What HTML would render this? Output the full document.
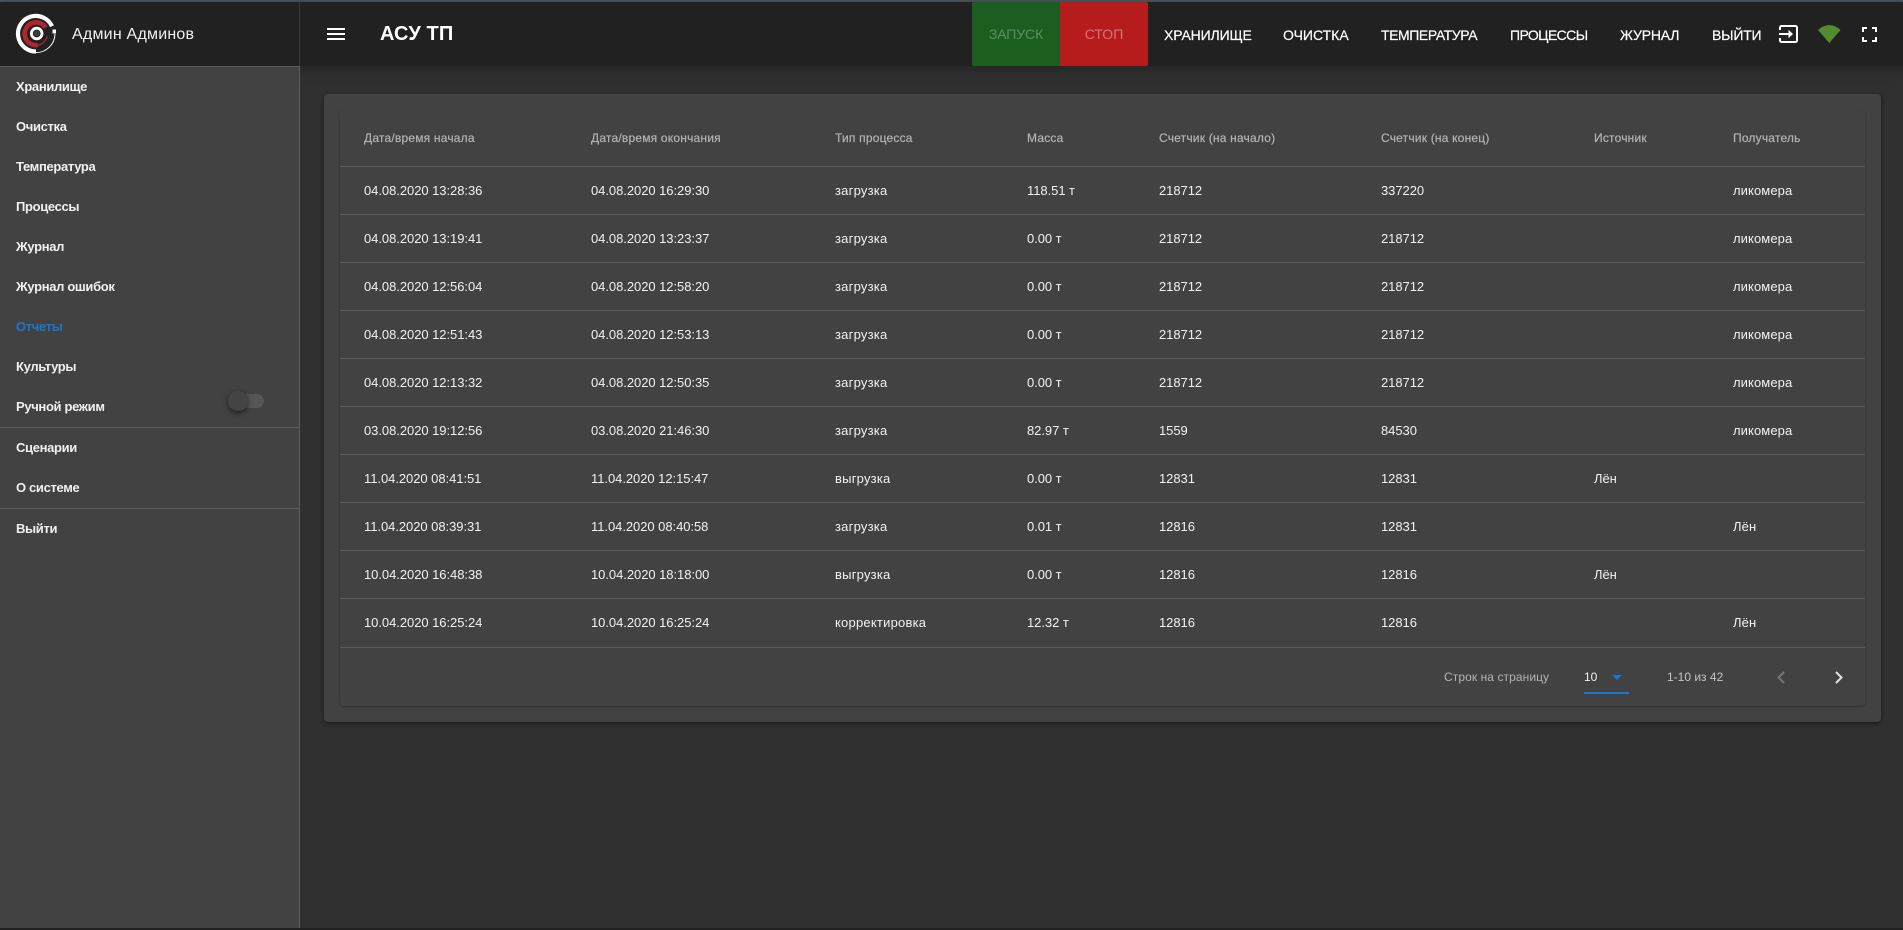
<!DOCTYPE html>
<html lang="ru">
<head>
<meta charset="utf-8">
<title>АСУ ТП</title>
<style>
*{box-sizing:border-box}
html,body{margin:0;padding:0;width:1903px;height:930px;overflow:hidden;background:#303030;font-family:"Liberation Sans",sans-serif;color:#fff}
.abs{position:absolute;white-space:nowrap}
#topline{left:0;top:0;width:1903px;height:2px;background:#4e5660}
#appbar{left:0;top:2px;width:1903px;height:64px;background:#212121;box-shadow:0 2px 6px rgba(0,0,0,.35),0 6px 16px rgba(0,0,0,.2)}
#drawer{left:0;top:2px;width:300px;height:926px;background:#424242;border-right:1px solid #5c5c5c}
#dhead{left:0;top:0;width:299px;height:65px;background:#212121;border-bottom:1px solid #585858}
#foot{left:0;top:928px;width:1903px;height:2px;background:#212121}
.mi{position:absolute;left:16px;font-size:13px;font-weight:700;line-height:16px;height:16px;color:#f0f0f0;letter-spacing:-.34px}
.hr{position:absolute;left:0;width:299px;height:1px;background:#5c5c5c}
.nav{position:absolute;top:25px;font-size:14px;line-height:16px;font-weight:400;color:#fff;-webkit-text-stroke:.2px #fff;white-space:nowrap}
#card{left:324px;top:94px;width:1557px;height:628px;background:#424242;border-radius:4px;box-shadow:0 2px 3px rgba(0,0,0,.3),0 1px 6px rgba(0,0,0,.15)}
#inner{left:340px;top:110px;width:1525px;height:596px;background:#424242;border-radius:4px;box-shadow:0 1px 2px rgba(0,0,0,.28),0 0 1px rgba(0,0,0,.06)}
table{position:absolute;left:0;top:0;border-collapse:collapse;table-layout:fixed;width:1525px}
th,td{padding:0 0 0 24px;text-align:left;font-size:13px;white-space:nowrap;border-bottom:1px solid #5a5a5a;overflow:hidden}
th{height:56px;font-weight:400;color:#b3b3b3;font-size:12px;letter-spacing:.2px;-webkit-text-stroke:.2px #b3b3b3}
td{height:48px;color:#f2f2f2;font-size:13px;letter-spacing:-.05px}
td:nth-child(3){letter-spacing:.22px}
td:nth-child(8){letter-spacing:.1px}
tbody tr:last-child td{height:49px}
.pg{position:absolute;font-size:12px;line-height:16px;white-space:nowrap}
</style>
</head>
<body>
<div id="topline" class="abs"></div>
<div id="appbar" class="abs"></div>
<div id="foot" class="abs"></div>

<div id="drawer" class="abs">
  <div id="dhead" class="abs">
    <svg class="abs" style="left:14px;top:11px" width="44" height="44" viewBox="0 0 44 44">
      <path d="M38 13.300A17.800 17.800 0 1 0 22 38.500" fill="none" stroke="#fff" stroke-width="4.200"/>
      <path d="M22 39.600A19 19 0 0 0 41 21" fill="none" stroke="#fff" stroke-width="1"/>
      <path d="M38.500 16.500h3.500v4h-3.500z" fill="#fff"/>
      <path d="M31.700 14.700A11.400 11.400 0 1 0 24 32" fill="none" stroke="#b2252f" stroke-width="4.600"/>
      <path d="M24 32A11.400 11.400 0 0 0 33.200 23" fill="none" stroke="#b2252f" stroke-width="1.200"/>
      <circle cx="22.700" cy="20.500" r="5.300" fill="none" stroke="#fff" stroke-width="2.800"/>
      <circle cx="22.700" cy="20.500" r="3" fill="#3c3c3c"/>
    </svg>
    <div class="abs" style="left:72px;top:23px;font-size:16px;line-height:20px;color:#f0f0f0;letter-spacing:.22px">Админ Админов</div>
  </div>
  <div class="mi" style="top:77px">Хранилище</div>
  <div class="mi" style="top:117px">Очистка</div>
  <div class="mi" style="top:157px">Температура</div>
  <div class="mi" style="top:197px">Процессы</div>
  <div class="mi" style="top:237px">Журнал</div>
  <div class="mi" style="top:277px">Журнал ошибок</div>
  <div class="mi" style="top:317px;color:#1976d2">Отчеты</div>
  <div class="mi" style="top:357px">Культуры</div>
  <div class="mi" style="top:397px">Ручной режим</div>
  <div class="abs" style="left:229px;top:392px;width:35px;height:14px;border-radius:7px;background:#565656"></div>
  <div class="abs" style="left:228px;top:389px;width:20px;height:20px;border-radius:50%;background:#444;box-shadow:0 2px 4px rgba(0,0,0,.4),0 1px 8px rgba(0,0,0,.2)"></div>
  <div class="hr" style="top:425px"></div>
  <div class="mi" style="top:438px">Сценарии</div>
  <div class="mi" style="top:478px">О системе</div>
  <div class="hr" style="top:506px"></div>
  <div class="mi" style="top:519px">Выйти</div>
</div>

<div class="abs" style="left:0;top:2px;width:1903px;height:64px;pointer-events:none">
  <div class="abs" style="left:299px;top:0;width:1px;height:64px;background:#3a3a3a"></div>
  <svg class="abs" style="left:327px;top:26px" width="18" height="12" viewBox="0 0 18 12"><path d="M0 0h18v2H0zM0 5h18v2H0zM0 10h18v2H0z" fill="#fff"/></svg>
  <div class="abs" style="left:380px;top:20px;font-size:20px;line-height:24px;font-weight:700;letter-spacing:.1px;color:#fff">АСУ ТП</div>

  <div class="abs" style="left:972px;top:0;width:88px;height:64px;background:#1b5e20;border-radius:2px 0 0 2px;color:#5a9060;font-size:14px;text-align:center;line-height:64px;letter-spacing:-.1px">ЗАПУСК</div>
  <div class="abs" style="left:1060px;top:0;width:88px;height:64px;background:#b71c1c;border-radius:0 2px 2px 0;color:#d67474;font-size:14px;text-align:center;line-height:64px">СТОП</div>

  <div class="nav" style="left:1164px;letter-spacing:-.14px">ХРАНИЛИЩЕ</div>
  <div class="nav" style="left:1283px">ОЧИСТКА</div>
  <div class="nav" style="left:1381px;letter-spacing:-.42px">ТЕМПЕРАТУРА</div>
  <div class="nav" style="left:1510px;letter-spacing:-.6px">ПРОЦЕССЫ</div>
  <div class="nav" style="left:1620px;letter-spacing:-.2px">ЖУРНАЛ</div>
  <div class="nav" style="left:1712px;letter-spacing:-.2px">ВЫЙТИ</div>

  <svg class="abs" style="left:1779px;top:23px" width="20" height="18" viewBox="0 0 20 18">
    <path d="M1 5V2.500A1.500 1.500 0 0 1 2.500 1h14A1.500 1.500 0 0 1 18 2.500v13a1.500 1.500 0 0 1-1.500 1.500h-14A1.500 1.500 0 0 1 1 15.500V13" fill="none" stroke="#fff" stroke-width="2"/>
    <path d="M0 8h9.500V4.800L14 9l-4.500 4.200V10H0z" fill="#fff"/>
  </svg>
  <svg class="abs" style="left:1817px;top:23px;overflow:visible" width="25" height="19" viewBox="0 0 25 19"><path d="M1 5Q12.250 -5 23.500 5L12.300 18z" fill="#558b2f"/></svg>
  <svg class="abs" style="left:1862px;top:25px" width="15" height="15" viewBox="0 0 15 15"><path d="M0 5V0h5v2H2v3zM10 0h5v5h-2V2h-3zM15 10v5h-5v-2h3v-3zM5 15H0v-5h2v3h3z" fill="#fff"/></svg>
</div>

<div class="abs" style="left:300px;top:66px;width:1603px;height:14px;background:linear-gradient(#272727,#303030)"></div>

<div id="card" class="abs"></div>
<div id="inner" class="abs">
<table>
<colgroup><col style="width:227px"><col style="width:244px"><col style="width:192px"><col style="width:132px"><col style="width:222px"><col style="width:213px"><col style="width:139px"><col style="width:156px"></colgroup>
<thead><tr><th>Дата/время начала</th><th>Дата/время окончания</th><th>Тип процесса</th><th>Масса</th><th>Счетчик (на начало)</th><th>Счетчик (на конец)</th><th>Источник</th><th>Получатель</th></tr></thead>
<tbody>
<tr><td>04.08.2020 13:28:36</td><td>04.08.2020 16:29:30</td><td>загрузка</td><td>118.51 т</td><td>218712</td><td>337220</td><td></td><td>ликомера</td></tr>
<tr><td>04.08.2020 13:19:41</td><td>04.08.2020 13:23:37</td><td>загрузка</td><td>0.00 т</td><td>218712</td><td>218712</td><td></td><td>ликомера</td></tr>
<tr><td>04.08.2020 12:56:04</td><td>04.08.2020 12:58:20</td><td>загрузка</td><td>0.00 т</td><td>218712</td><td>218712</td><td></td><td>ликомера</td></tr>
<tr><td>04.08.2020 12:51:43</td><td>04.08.2020 12:53:13</td><td>загрузка</td><td>0.00 т</td><td>218712</td><td>218712</td><td></td><td>ликомера</td></tr>
<tr><td>04.08.2020 12:13:32</td><td>04.08.2020 12:50:35</td><td>загрузка</td><td>0.00 т</td><td>218712</td><td>218712</td><td></td><td>ликомера</td></tr>
<tr><td>03.08.2020 19:12:56</td><td>03.08.2020 21:46:30</td><td>загрузка</td><td>82.97 т</td><td>1559</td><td>84530</td><td></td><td>ликомера</td></tr>
<tr><td>11.04.2020 08:41:51</td><td>11.04.2020 12:15:47</td><td>выгрузка</td><td>0.00 т</td><td>12831</td><td>12831</td><td>Лён</td><td></td></tr>
<tr><td>11.04.2020 08:39:31</td><td>11.04.2020 08:40:58</td><td>загрузка</td><td>0.01 т</td><td>12816</td><td>12831</td><td></td><td>Лён</td></tr>
<tr><td>10.04.2020 16:48:38</td><td>10.04.2020 18:18:00</td><td>выгрузка</td><td>0.00 т</td><td>12816</td><td>12816</td><td>Лён</td><td></td></tr>
<tr><td>10.04.2020 16:25:24</td><td>10.04.2020 16:25:24</td><td>корректировка</td><td>12.32 т</td><td>12816</td><td>12816</td><td></td><td>Лён</td></tr>
</tbody>
</table>
</div>

<div class="pg" style="left:1444px;top:669px;color:#b3b3b3;letter-spacing:.08px">Строк на страницу</div>
<div class="pg" style="left:1584px;top:669px;color:#f2f2f2">10</div>
<svg class="abs" style="left:1612px;top:675px" width="10" height="5" viewBox="0 0 10 5"><path d="M0 0h10L5 5z" fill="#1976d2"/></svg>
<div class="abs" style="left:1584px;top:692px;width:45px;height:2px;background:#1976d2"></div>
<div class="pg" style="left:1667px;top:669px;color:#c4c4c4">1-10 из 42</div>
<svg class="abs" style="left:1776px;top:671px" width="10" height="13" viewBox="0 0 10 13"><path d="M8 1L2.500 6.500 8 12" fill="none" stroke="#757575" stroke-width="2"/></svg>
<svg class="abs" style="left:1834px;top:671px" width="10" height="13" viewBox="0 0 10 13"><path d="M2 1l5.500 5.500L2 12" fill="none" stroke="#e0e0e0" stroke-width="2"/></svg>
</body>
</html>
